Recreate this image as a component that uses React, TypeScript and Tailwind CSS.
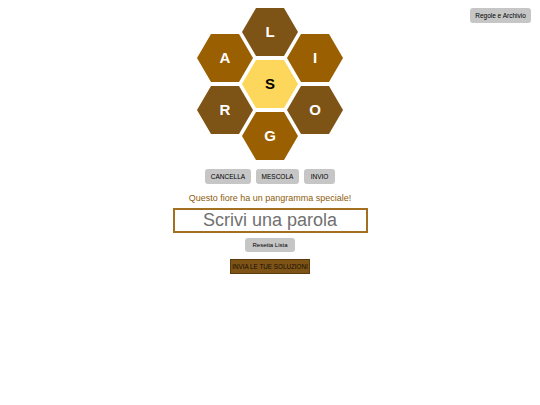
import React from 'react';

const DARK = 'bg-[#7e5316]';
const LIGHT = 'bg-[#9a5f00]';

function Hex({ letter, color, center }: { letter: string; color: string; center?: boolean }) {
    return (
        <div
            className={`flex h-[48px] w-[56px] items-center justify-center ${color} [clip-path:polygon(25%_0,75%_0,100%_50%,75%_100%,25%_100%,0_50%)]`}
        >
            <span className={`text-[15px] font-bold ${center ? 'text-black' : 'text-white'}`}>{letter}</span>
        </div>
    );
}

export default function App() {
    return (
        <div className="relative h-[405px] w-full bg-white font-['Liberation_Sans',Arial,sans-serif]">
            {/* top-right rules button */}
            <button className="absolute right-[9px] top-[8px] h-[15px] w-[61px] rounded-[3px] bg-[#c6c6c6] text-[6.5px] text-black">
                Regole e Archivio
            </button>

            <div className="flex flex-col items-center pt-[8px]">
                {/* hive */}
                <div className="flex items-start">
                    <div className="mt-[26px] flex flex-col gap-[4px]">
                        <Hex letter="A" color={LIGHT} />
                        <Hex letter="R" color={DARK} />
                    </div>
                    <div className="-mx-[11px] flex flex-col gap-[4px]">
                        <Hex letter="L" color={DARK} />
                        <Hex letter="S" color="bg-[#fcd75c]" center />
                        <Hex letter="G" color={LIGHT} />
                    </div>
                    <div className="mt-[26px] flex flex-col gap-[4px]">
                        <Hex letter="I" color={LIGHT} />
                        <Hex letter="O" color={DARK} />
                    </div>
                </div>

                {/* controls */}
                <div className="mt-[9px] flex gap-[5px]">
                    <button className="h-[15px] w-[46px] rounded-[3px] bg-[#c6c6c6] text-[6.5px] text-black">CANCELLA</button>
                    <button className="h-[15px] w-[43px] rounded-[3px] bg-[#c6c6c6] text-[6.5px] text-black">MESCOLA</button>
                    <button className="h-[15px] w-[31px] rounded-[3px] bg-[#c6c6c6] text-[6.5px] text-black">INVIO</button>
                </div>

                <p className="mt-[8px] text-[9px] leading-[12px] text-[#8d5c0c]">Questo fiore ha un pangramma speciale!</p>

                <input
                    className="mt-[4px] h-[25px] w-[195px] border-2 border-[#a36f20] px-1 text-center text-[18px] text-black outline-none placeholder:text-[#707070]"
                    placeholder="Scrivi una parola"
                />

                <button className="mt-[5px] h-[14px] w-[50px] rounded-[3px] bg-[#c6c6c6] text-[6px] text-black">Resetta Lista</button>

                <button className="mt-[7px] h-[15px] w-[80px] whitespace-nowrap border border-[#5c3b0b] bg-[#7e5316] text-[6.3px] text-[#161006]">
                    INVIA LE TUE SOLUZIONI
                </button>
            </div>
        </div>
    );
}
